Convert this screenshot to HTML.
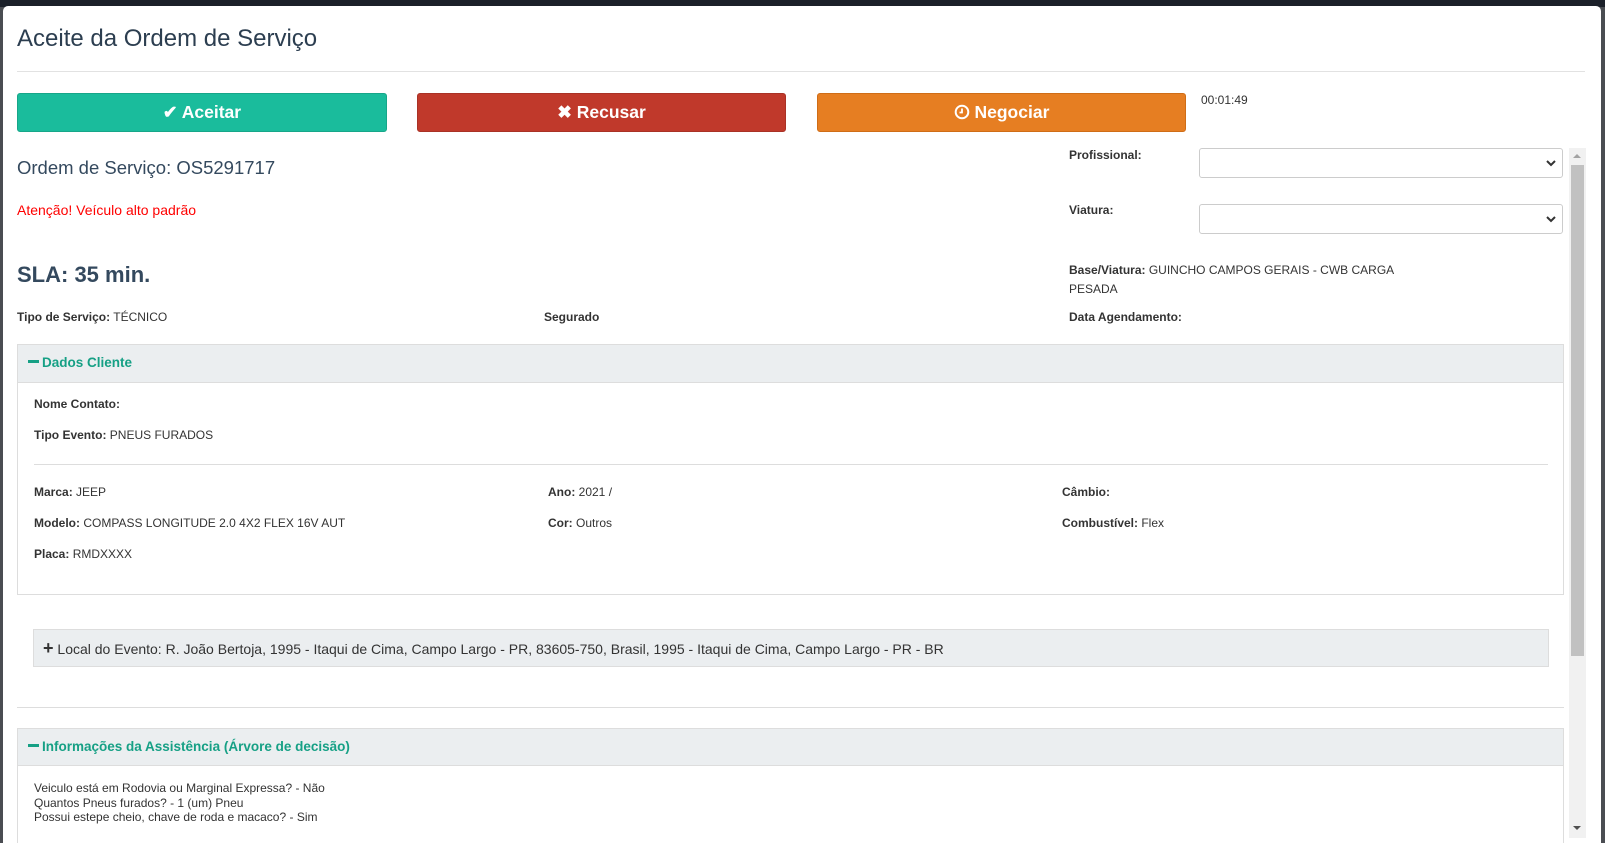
<!DOCTYPE html>
<html><head><meta charset="utf-8"><style>
*{box-sizing:border-box;margin:0;padding:0}
body{width:1605px;height:843px;overflow:hidden;background:#4a4d52;font-family:"Liberation Sans",Arial,sans-serif;color:#333;position:relative}
.a{position:absolute;white-space:nowrap}
.top{left:0;top:0;width:1605px;height:7px;background:#1b2029}
.modal{left:3px;top:6px;width:1598px;height:837px;background:#fff;border-radius:5px 5px 0 0}
.btn{height:39px;border-radius:3px;color:#fff;font-weight:bold;font-size:17.5px;text-align:center;line-height:37px}
.s{font-size:12px;color:#333}
b{font-weight:bold}
.sel{height:30px;border:1px solid #ccc;border-radius:3px;background:#fff}
.sel svg{position:absolute;right:6px;top:11px}
.ph{background:#ebeef0;border:1px solid #ddd}
.g{color:#16a085;font-weight:bold;font-size:13.5px}
.dash{display:inline-block;width:11px;height:3px;background:#16a085;vertical-align:4px;margin-right:3px}
</style></head><body>
<div class="a top"></div>
<div class="a modal"></div>
<div class="a" style="left:17px;top:25px;font-size:24px;color:#2c3e50">Aceite da Ordem de Serviço</div>
<div class="a" style="left:17px;top:71px;width:1568px;height:1px;background:#e2e2e2"></div>

<div class="a btn" style="left:17px;top:93px;width:370px;background:#1abc9c;border:1px solid #17a689">✔ Aceitar</div>
<div class="a btn" style="left:417px;top:93px;width:369px;background:#c0392b;border:1px solid #a93226">✖ Recusar</div>
<div class="a btn" style="left:817px;top:93px;width:369px;background:#e67e22;border:1px solid #cf6d17"><svg width="16" height="16" viewBox="0 0 16 16" style="vertical-align:-2px"><circle cx="8" cy="8" r="6.3" fill="none" stroke="#fff" stroke-width="2"/><path d="M8 4.5V8.5H5.5" fill="none" stroke="#fff" stroke-width="1.8"/></svg> Negociar</div>
<div class="a s" style="left:1201px;top:93px">00:01:49</div>

<div class="a" style="left:17px;top:157px;font-size:18.5px;color:#34495e">Ordem de Serviço: OS5291717</div>
<div class="a" style="left:17px;top:202px;font-size:14px;color:#f00">Atenção! Veículo alto padrão</div>
<div class="a" style="left:17px;top:262px;font-size:22px;font-weight:bold;color:#34495e">SLA: 35 min.</div>

<div class="a s" style="left:1069px;top:148px"><b>Profissional:</b></div>
<div class="a sel" style="left:1199px;top:148px;width:364px"><svg width="10" height="7" viewBox="0 0 10 7"><path d="M1 1l4 4 4-4" fill="none" stroke="#333" stroke-width="2"/></svg></div>
<div class="a s" style="left:1069px;top:203px"><b>Viatura:</b></div>
<div class="a sel" style="left:1199px;top:204px;width:364px"><svg width="10" height="7" viewBox="0 0 10 7"><path d="M1 1l4 4 4-4" fill="none" stroke="#333" stroke-width="2"/></svg></div>
<div class="a s" style="left:1069px;top:261px;line-height:19px"><b>Base/Viatura:</b> GUINCHO CAMPOS GERAIS - CWB CARGA<br>PESADA</div>

<div class="a s" style="left:17px;top:310px"><b>Tipo de Serviço:</b> TÉCNICO</div>
<div class="a s" style="left:544px;top:310px"><b>Segurado</b></div>
<div class="a s" style="left:1069px;top:310px"><b>Data Agendamento:</b></div>

<div class="a" style="left:17px;top:344px;width:1547px;height:251px;border:1px solid #ddd"></div>
<div class="a ph" style="left:17px;top:344px;width:1547px;height:39px"></div>
<div class="a g" style="left:28px;top:355px"><span class="dash"></span>Dados Cliente</div>
<div class="a s" style="left:34px;top:397px"><b>Nome Contato:</b></div>
<div class="a s" style="left:34px;top:428px"><b>Tipo Evento:</b> PNEUS FURADOS</div>
<div class="a" style="left:34px;top:464px;width:1514px;height:1px;background:#ddd"></div>
<div class="a s" style="left:34px;top:485px"><b>Marca:</b> JEEP</div>
<div class="a s" style="left:34px;top:516px"><b>Modelo:</b> COMPASS LONGITUDE 2.0 4X2 FLEX 16V AUT</div>
<div class="a s" style="left:34px;top:547px"><b>Placa:</b> RMDXXXX</div>
<div class="a s" style="left:548px;top:485px"><b>Ano:</b> 2021 /</div>
<div class="a s" style="left:548px;top:516px"><b>Cor:</b> Outros</div>
<div class="a s" style="left:1062px;top:485px"><b>Câmbio:</b></div>
<div class="a s" style="left:1062px;top:516px"><b>Combustível:</b> Flex</div>

<div class="a ph" style="left:33px;top:629px;width:1516px;height:38px"></div>
<div class="a" style="left:43px;top:641px;font-size:14px;color:#333"><b style="font-size:18px;line-height:10px">+</b> Local do Evento: R. João Bertoja, 1995 - Itaqui de Cima, Campo Largo - PR, 83605-750, Brasil, 1995 - Itaqui de Cima, Campo Largo - PR - BR</div>

<div class="a" style="left:17px;top:707px;width:1547px;height:1px;background:#ddd"></div>
<div class="a" style="left:17px;top:728px;width:1547px;height:115px;border:1px solid #ddd;border-bottom:none"></div>
<div class="a ph" style="left:17px;top:728px;width:1547px;height:38px"></div>
<div class="a g" style="left:28px;top:739px"><span class="dash"></span>Informações da Assistência (Árvore de decisão)</div>
<div class="a s" style="left:34px;top:781px;line-height:14.5px">Veiculo está em Rodovia ou Marginal Expressa? - Não<br>Quantos Pneus furados? - 1 (um) Pneu<br>Possui estepe cheio, chave de roda e macaco? - Sim</div>

<div class="a" style="left:1569px;top:148px;width:17px;height:690px;background:#f1f1f1"></div>
<div class="a" style="left:1571px;top:165px;width:13px;height:491px;background:#c1c1c1"></div>
<div class="a" style="left:1573px;top:154px;width:0;height:0;border:4px solid transparent;border-bottom:4px solid #a3a3a3;border-top:0"></div>
<div class="a" style="left:1573px;top:826px;width:0;height:0;border:4px solid transparent;border-top:4px solid #505050;border-bottom:0"></div>
</body></html>
